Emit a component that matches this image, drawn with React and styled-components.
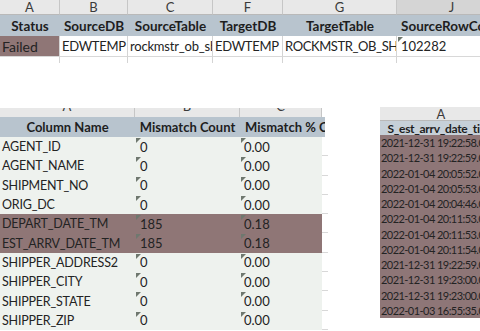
import React from "react"
import styled, { createGlobalStyle } from 'styled-components';

const GlobalStyle = createGlobalStyle`
  html, body {
    margin: 0;
    padding: 0;
    background: #ffffff;
    width: 480px;
    height: 331px;
    overflow: hidden;
  }
  * {
    box-sizing: border-box;
  }
`

const Page = styled.div`
  width: 480px;
  height: 331px;
  overflow: hidden;
  font-family: Lato, "Open Sans", sans-serif;
  color: #222;
  display: flex;
  flex-direction: column;
`

const Sheet = styled.div`
  display: flex;
  flex-direction: column;
  flex-shrink: 0;
`

const Row = styled.div`
  display: flex;
  height: ${props => props.h}px;
  flex-shrink: 0;
`

const Letter = styled.div`
  width: ${props => props.w}px;
  flex-shrink: 0;
  background: ${props => props.active ? '#d5d5d5' : '#e8e8e8'};
  border-right: 1px solid #c6c6c6;
  border-bottom: 1px solid #b9b9b9;
  color: #3a3a3a;
  font-size: 13px;
  line-height: 15px;
  text-align: center;
  overflow: hidden;
`

const ClippedLetter = styled(Letter)`
  display: flex;
  align-items: flex-end;
  justify-content: center;
  line-height: 22px;
  font-size: 13px;
  border-bottom: none;
`

const Head = styled.div`
  width: ${props => props.w}px;
  flex-shrink: 0;
  background: ${props => props.bg || '#b8c4ce'};
  font-weight: 700;
  font-size: ${props => props.size || 13.5}px;
  letter-spacing: ${props => props.ls || 0}px;
  color: #1e1e1e;
  white-space: nowrap;
  overflow: hidden;
  display: flex;
  align-items: center;
  justify-content: ${props => props.left ? 'flex-start' : 'center'};
  padding-left: ${props => props.pad || 0}px;
`

const Cell = styled.div`
  position: relative;
  width: ${props => props.w}px;
  flex-shrink: 0;
  background: ${props => props.bg || '#ffffff'};
  border-right: ${props => props.grid ? '1px solid #d4d4d4' : 'none'};
  border-bottom: ${props => props.line ? '1px solid #d8d8d8' : 'none'};
  font-size: ${props => props.size || 13}px;
  letter-spacing: ${props => props.ls || 0}px;
  color: #232323;
  white-space: nowrap;
  overflow: hidden;
  display: flex;
  align-items: center;
  padding-left: ${props => props.pad || 2}px;

  &::before {
    content: '';
    display: ${props => props.flag ? 'block' : 'none'};
    position: absolute;
    top: 1px;
    left: 1px;
    border-top: 5px solid #6f786f;
    border-right: 5px solid transparent;
  }
`

const Bottom = styled.div`
  display: flex;
  align-items: flex-start;
  margin-top: 44px;
`

const CompareSheet = styled.div`
  display: flex;
  flex-direction: column;
  padding-top: 1px;
  flex-shrink: 0;
`

const DateSheet = styled.div`
  display: flex;
  flex-direction: column;
  flex-shrink: 0;
  margin-left: 52px;
  width: 123px;
`

const MAUVE = '#8f7676'
const PALE = '#eef2ee'

const topCols = [60, 68, 85, 70, 114, 110]
const midCols = [135, 105, 82, 6]

const compareRows = [
  ['AGENT_ID', '0', '0.00'],
  ['AGENT_NAME', '0', '0.00'],
  ['SHIPMENT_NO', '0', '0.00'],
  ['ORIG_DC', '0', '0.00'],
  ['DEPART_DATE_TM', '185', '0.18', true],
  ['EST_ARRV_DATE_TM', '185', '0.18', true],
  ['SHIPPER_ADDRESS2', '0', '0.00'],
  ['SHIPPER_CITY', '0', '0.00'],
  ['SHIPPER_STATE', '0', '0.00'],
  ['SHIPPER_ZIP', '0', '0.00'],
]

const dates = [
  '2021-12-31 19:22:58.0',
  '2021-12-31 19:22:59.0',
  '2022-01-04 20:05:52.0',
  '2022-01-04 20:05:53.0',
  '2022-01-04 20:04:46.0',
  '2022-01-04 20:11:53.0',
  '2022-01-04 20:11:53.0',
  '2022-01-04 20:11:54.0',
  '2021-12-31 19:22:59.0',
  '2021-12-31 19:23:00.0',
  '2021-12-31 19:23:00.0',
  '2022-01-03 16:55:35.0',
]

const App = () => (
  <Page>
    <GlobalStyle />
    <Sheet>
      <Row h={15}>
        {['A', 'B', 'C', 'F', 'G', 'J'].map((l, i) =>
          <Letter key={l} w={topCols[i]} active={l === 'J'}>{l}</Letter>
        )}
      </Row>
      <Row h={21}>
        <Head w={topCols[0]}>Status</Head>
        <Head w={topCols[1]}>SourceDB</Head>
        <Head w={topCols[2]}>SourceTable</Head>
        <Head w={topCols[3]}>TargetDB</Head>
        <Head w={topCols[4]}>TargetTable</Head>
        <Head w={topCols[5]} left pad={4}>SourceRowCount</Head>
      </Row>
      <Row h={21}>
        <Cell w={topCols[0]} bg={MAUVE} grid line size={14}>Failed</Cell>
        <Cell w={topCols[1]} grid line ls={-0.3}>EDWTEMP</Cell>
        <Cell w={topCols[2]} grid line ls={-0.2}>rockmstr_ob_shipment</Cell>
        <Cell w={topCols[3]} grid line ls={-0.3}>EDWTEMP</Cell>
        <Cell w={topCols[4]} grid line ls={-0.4}>ROCKMSTR_OB_SHIPMENT</Cell>
        <Cell w={topCols[5]} grid line flag pad={4}>102282</Cell>
      </Row>
      <Row h={6}>
        {topCols.map((w, i) => <Cell key={i} w={w} grid />)}
      </Row>
    </Sheet>

    <Bottom>
      <CompareSheet>
        <Row h={9}>
          <ClippedLetter w={midCols[0]}>A</ClippedLetter>
          <ClippedLetter w={midCols[1]}>B</ClippedLetter>
          <ClippedLetter w={midCols[2]}>C</ClippedLetter>
        </Row>
        <Row h={20}>
          <Head w={midCols[0]} size={13}>Column Name</Head>
          <Head w={midCols[1]} size={13}>Mismatch Count</Head>
          <Head w={midCols[2] + 3} size={13} left pad={5}>Mismatch % Change</Head>
        </Row>
        {compareRows.map(([name, count, pct, hot]) =>
          <Row h={19.3} key={name}>
            <Cell w={midCols[0]} bg={hot ? MAUVE : PALE} size={12.5} ls={-0.2}>{name}</Cell>
            <Cell w={midCols[1]} bg={hot ? MAUVE : PALE} size={13} flag pad={5}>{count}</Cell>
            <Cell w={midCols[2]} bg={hot ? MAUVE : PALE} size={13} flag pad={4}>{pct}</Cell>
            <Cell w={midCols[3]} line />
          </Row>
        )}
      </CompareSheet>

      <DateSheet>
        <Row h={14}>
          <Letter w={123}>A</Letter>
        </Row>
        <Row h={14}>
          <Head w={123} bg="#c6d0d8" size={12} ls={-0.3}>S_est_arrv_date_time</Head>
        </Row>
        {dates.map((d, i) =>
          <Row h={15.25} key={i}>
            <Cell w={123} bg="#8e7677" size={11} ls={-0.55} pad={1}>{d}</Cell>
          </Row>
        )}
      </DateSheet>
    </Bottom>
  </Page>
)

export default App
